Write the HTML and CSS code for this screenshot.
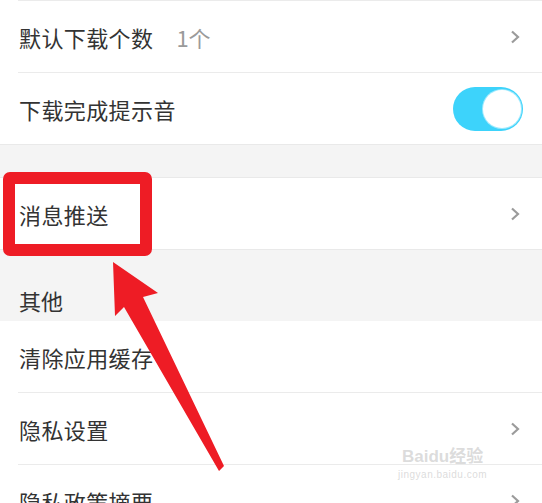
FILE: index.html
```html
<!DOCTYPE html>
<html lang="zh-CN">
<head>
  <meta charset="UTF-8" />
  <meta name="viewport" content="width=device-width, initial-scale=1.0"/>
  <title>设置</title>
  <link rel="stylesheet" href="styles.css">
</head>
<body>
  <div class="page">
    <!-- Download settings -->
    <div class="group">
      <div class="item">
        <div class="item-body">
          <span class="item-label">默认下载个数</span>
          <span class="item-value">1个</span>
          <svg class="chevron" width="12" height="14" viewBox="0 0 12 14"><polyline points="3,1.5 9,7 3,12.5" /></svg>
        </div>
      </div>
      <div class="item">
        <div class="item-body">
          <span class="item-label">下载完成提示音</span>
          <span class="switch"><span class="switch-knob"></span></span>
        </div>
      </div>
    </div>

    <div class="gap"></div>

    <div class="group group-top">
      <div class="item">
        <div class="item-body no-line">
          <span class="item-label">消息推送</span>
          <svg class="chevron" width="12" height="14" viewBox="0 0 12 14"><polyline points="3,1.5 9,7 3,12.5" /></svg>
        </div>
      </div>
    </div>

    <div class="section-title">其他</div>

    <div class="group">
      <div class="item">
        <div class="item-body no-line">
          <span class="item-label">清除应用缓存</span>
        </div>
      </div>
      <div class="item">
        <div class="item-body">
          <span class="item-label">隐私设置</span>
          <svg class="chevron" width="12" height="14" viewBox="0 0 12 14"><polyline points="3,1.5 9,7 3,12.5" /></svg>
        </div>
      </div>
      <div class="item">
        <div class="item-body">
          <span class="item-label">隐私政策摘要</span>
          <svg class="chevron" width="12" height="14" viewBox="0 0 12 14"><polyline points="3,1.5 9,7 3,12.5" /></svg>
        </div>
      </div>
    </div>

    <!-- annotation overlay -->
    <div class="mark-box"></div>
    <svg class="mark-arrow" width="542" height="503" viewBox="0 0 542 503">
      <polygon points="113,262 158,293 143,297 224,466 219,471 124,307 115,316" />
    </svg>

    <div class="watermark">
      <div class="wm-logo">Bai<span class="wm-paw">du</span>经验</div>
      <div class="wm-url">jingyan.baidu.com</div>
    </div>
  </div>
</body>
</html>
```

FILE: styles.css
```css
body {
  margin: 0;
  background-color: #f4f4f4;
  font-family: "Noto Sans CJK SC", "Noto Sans", sans-serif;
  color: #333;
  overflow: hidden;
}

.page {
  position: relative;
  height: 503px;
  overflow: hidden;
}

.group {
  background-color: #fff;
  border-bottom: 1px solid #e9e9e9;
}

.group-top {
  border-top: 1px solid #e9e9e9;
}

.item {
  padding-left: 18px;
}

.item-body {
  height: 71px;
  border-top: 1px solid #ebebeb;
  display: flex;
  align-items: center;
  padding-right: 19px;
}

.item-body.no-line {
  border-top: none;
  height: 71px;
}

.item-label {
  padding-left: 1px;
  font-size: 22px;
  letter-spacing: 0.4px;
  flex: none;
}

.item-value {
  margin-left: 23px;
  font-size: 22px;
  color: #9a9a9a;
}

.chevron {
  margin-left: auto;
  margin-right: 2px;
  fill: none;
  stroke: #9b9b9b;
  stroke-width: 2.2;
}

.switch {
  margin-left: auto;
  width: 70px;
  height: 44px;
  border-radius: 22px;
  background-color: #3dd3fb;
  display: flex;
  align-items: center;
  justify-content: flex-end;
  padding-right: 2px;
  box-sizing: border-box;
}

.switch-knob {
  width: 38px;
  height: 38px;
  border-radius: 50%;
  background-color: #fff;
  box-shadow: 0 0 0 1px #9ee9fd;
}

.gap {
  height: 32px;
}

.section-title {
  height: 71px;
  box-sizing: border-box;
  padding: 35px 0 0 19px;
  font-size: 22px;
  line-height: 30px;
}

.mark-box {
  position: absolute;
  left: 3px;
  top: 172px;
  width: 149px;
  height: 84px;
  box-sizing: border-box;
  border: 12px solid #ee1c25;
  border-radius: 7px;
}

.mark-arrow {
  position: absolute;
  left: 0;
  top: 0;
  fill: #ee1c25;
}

.watermark {
  position: absolute;
  left: 398px;
  top: 446px;
  color: rgba(190, 190, 190, 0.55);
  text-align: center;
}

.wm-logo {
  font-family: "Liberation Sans", "Noto Sans CJK SC", sans-serif;
  font-size: 17px;
  font-weight: bold;
  line-height: 22px;
}

.wm-url {
  font-family: "Liberation Sans", sans-serif;
  font-size: 10px;
  line-height: 14px;
  letter-spacing: 0.5px;
}
```
